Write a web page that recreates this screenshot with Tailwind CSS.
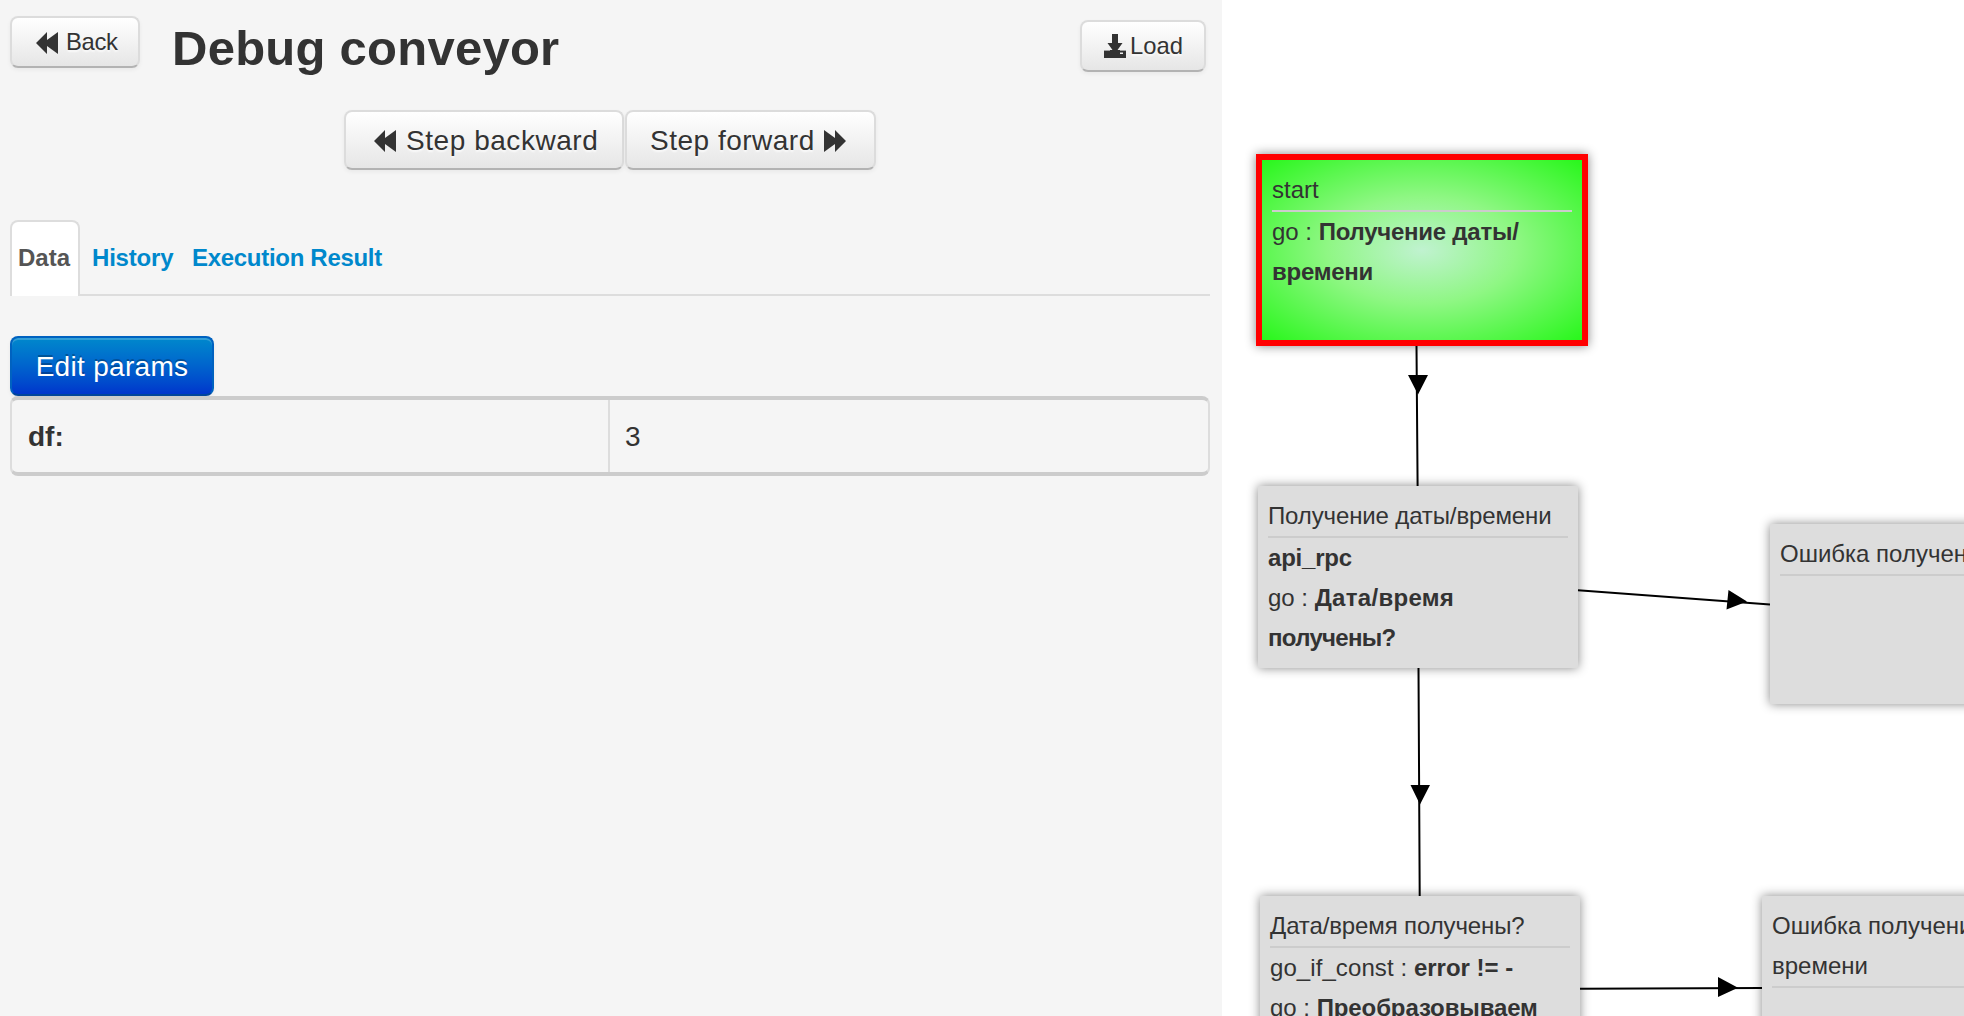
<!DOCTYPE html>
<html lang="ru">
<head>
<meta charset="utf-8">
<title>Debug conveyor</title>
<script src="https://cdn.jsdelivr.net/npm/@tailwindcss/browser@4"></script>
</head>
<body class="w-[1964px] h-[1016px] overflow-hidden flex bg-white text-[#333] font-['Liberation_Sans',Arial,sans-serif]">
<svg class="hidden">
  <symbol id="rewind" viewBox="0 0 23 22"><path d="M0 11 11 0V8L22 0V22L11 14V22Z"/></symbol>
  <symbol id="download" viewBox="0 0 22 24"><path fill-rule="evenodd" d="M8 0H14V9H18.5L13.5 16H22V24H0V16H8.5L3.5 9H8ZM16 18.5V20H19V18.5Z"/><path d="M0 16.5H22" stroke="#eee" stroke-width=".6" stroke-dasharray="6 10"/></symbol>
</svg>

<aside class="w-[1222px] shrink-0 h-full bg-[#f5f5f5] pl-[10px] pr-3 flex flex-col">
  <header class="flex items-start h-[110px] pt-4">
    <button class="w-[130px] h-[52px] flex items-center pl-6 gap-[7px] rounded-lg border-2 border-[#dcdcdc] border-b-[#b3b3b3] bg-linear-to-b from-white to-[#e6e6e6] shadow-[0_2px_4px_rgba(0,0,0,.05)] text-[23.8px] leading-10 pb-px text-shadow-[0_2px_2px_rgba(255,255,255,.75)]">
      <svg class="w-[23px] h-[22px] mt-0.5" fill="#333"><use href="#rewind"/></svg><span class="tracking-[-0.3px]">Back</span>
    </button>
    <h1 class="ml-[32px] mt-1 text-[49px] leading-[56px] font-bold tracking-[0.25px]">Debug conveyor</h1>
    <button class="ml-auto mr-1 mt-1 w-[126px] h-[52px] flex items-center pl-[22px] gap-1 rounded-lg border-2 border-[#dcdcdc] border-b-[#b3b3b3] bg-linear-to-b from-white to-[#e6e6e6] shadow-[0_2px_4px_rgba(0,0,0,.05)] text-[23.8px] leading-10 pb-px text-shadow-[0_2px_2px_rgba(255,255,255,.75)]">
      <svg class="w-[22px] h-6 mt-px" fill="#333"><use href="#download"/></svg><span>Load</span>
    </button>
  </header>

  <div class="flex gap-px pl-[334px]">
    <button class="w-[280px] h-[60px] flex items-center pl-[28px] gap-[9px] rounded-lg border-2 border-[#dcdcdc] border-b-[#b3b3b3] bg-linear-to-b from-white to-[#e6e6e6] shadow-[0_2px_4px_rgba(0,0,0,.05)] text-[28px] text-shadow-[0_2px_2px_rgba(255,255,255,.75)]">
      <svg class="w-[23px] h-[22px] mt-0.5" fill="#333"><use href="#rewind"/></svg><span class="mt-0.5 tracking-[0.55px]">Step backward</span>
    </button>
    <button class="w-[251px] h-[60px] flex items-center pl-[23px] gap-[8px] rounded-lg border-2 border-[#dcdcdc] border-b-[#b3b3b3] bg-linear-to-b from-white to-[#e6e6e6] shadow-[0_2px_4px_rgba(0,0,0,.05)] text-[28px] text-shadow-[0_2px_2px_rgba(255,255,255,.75)]">
      <span class="mt-0.5 tracking-[0.5px]">Step forward</span><svg class="w-[23px] h-[22px] mt-0.5 -scale-x-100" fill="#333"><use href="#rewind"/></svg>
    </button>
  </div>

  <nav class="mt-[50px] h-[76px] flex text-[24px] leading-[72px] font-bold text-[#0088cc] shadow-[inset_0_-2px_#ddd]">
    <a class="w-[70px] h-[76px] pl-[6px] rounded-t-lg border-2 border-b-0 border-[#ddd] bg-white text-[#555]">Data</a>
    <a class="ml-3 mt-0.5 w-[100px] tracking-[-0.2px]">History</a>
    <a class="mt-0.5 tracking-[-0.3px]">Execution Result</a>
  </nav>

  <button class="mt-10 w-[204px] h-[60px] pt-0.5 rounded-lg border-2 border-[#0062c0] border-b-[#00459b] bg-linear-to-b from-[#0088cc] to-[#0035cc] shadow-[inset_0_2px_rgba(255,255,255,.2),0_2px_4px_rgba(0,0,0,.05)] text-[28px] tracking-[0.3px] text-white text-shadow-[0_-2px_rgba(0,0,0,.25)]">Edit params</button>

  <div class="h-20 w-[1200px] grid grid-cols-[598px_1fr] rounded-lg border-x-2 border-y-4 border-x-[#ddd] border-y-[#ccc] text-[28px] leading-[73px]">
    <div class="h-[72px] pl-4 font-bold border-r-2 border-[#ddd]">df:</div>
    <div class="h-[72px] pl-[15px]">3</div>
  </div>
</aside>

<main class="relative flex-1 h-full overflow-hidden bg-white text-[24px] leading-10">
  <section class="absolute left-[34px] top-[154px] w-[332px] h-[192px] border-6 border-[#f00] p-[10px] bg-[radial-gradient(ellipse_farthest-corner,#c0f2d0,#8ff784_42%,#28f71b)] shadow-[0_0_10px_#888]">
    <h2 class="border-b-2 border-[#ccc]">start</h2>
    <p>go : <b class="tracking-[-0.25px]">Получение даты/<br>времени</b></p>
  </section>
  <section class="absolute left-[36px] top-[486px] w-[320px] h-[182px] p-[10px] bg-[#ddd] shadow-[0_0_10px_#888]">
    <h2 class="border-b-2 border-[#ccc] tracking-[-0.13px]">Получение даты/времени</h2>
    <p><b class="tracking-[-0.2px]">api_rpc</b></p>
    <p>go : <b><span class="tracking-[0.3px]">Дата/время</span><br><span class="tracking-[-0.7px]">получены?</span></b></p>
  </section>
  <section class="absolute left-[548px] top-[524px] w-[320px] h-[180px] p-[10px] bg-[#ddd] shadow-[0_0_10px_#888] whitespace-nowrap">
    <h2 class="border-b-2 border-[#ccc]">Ошибка получения</h2>
  </section>
  <section class="absolute left-[38px] top-[896px] w-[320px] h-[220px] p-[10px] bg-[#ddd] shadow-[0_0_10px_#888]">
    <h2 class="border-b-2 border-[#ccc] tracking-[-0.12px]">Дата/время получены?</h2>
    <p><span class="tracking-[0.08px]">go_if_const : </span><b>error != -</b></p>
    <p>go : <b class="tracking-[-0.12px]">Преобразовываем</b></p>
  </section>
  <section class="absolute left-[540px] top-[896px] w-[320px] h-[180px] p-[10px] bg-[#ddd] shadow-[0_0_10px_#888] whitespace-nowrap">
    <h2 class="border-b-2 border-[#ccc]">Ошибка получения даты/<br>времени</h2>
  </section>
  <svg class="absolute left-0 top-0" width="742" height="1016" stroke="#000" stroke-width="2">
    <path d="M194.5 346 195.6 486M356 590.3 548 604.5M196.5 668 197.7 896M358 988.8 540 988"/>
    <path stroke="none" d="M186 375H206L196 394.5ZM506.5 590 504.5 609.5 525 601.5ZM188.5 785H208L198 804.5ZM496 977V997L516 987.7Z"/>
  </svg>
</main>
</body>
</html>
